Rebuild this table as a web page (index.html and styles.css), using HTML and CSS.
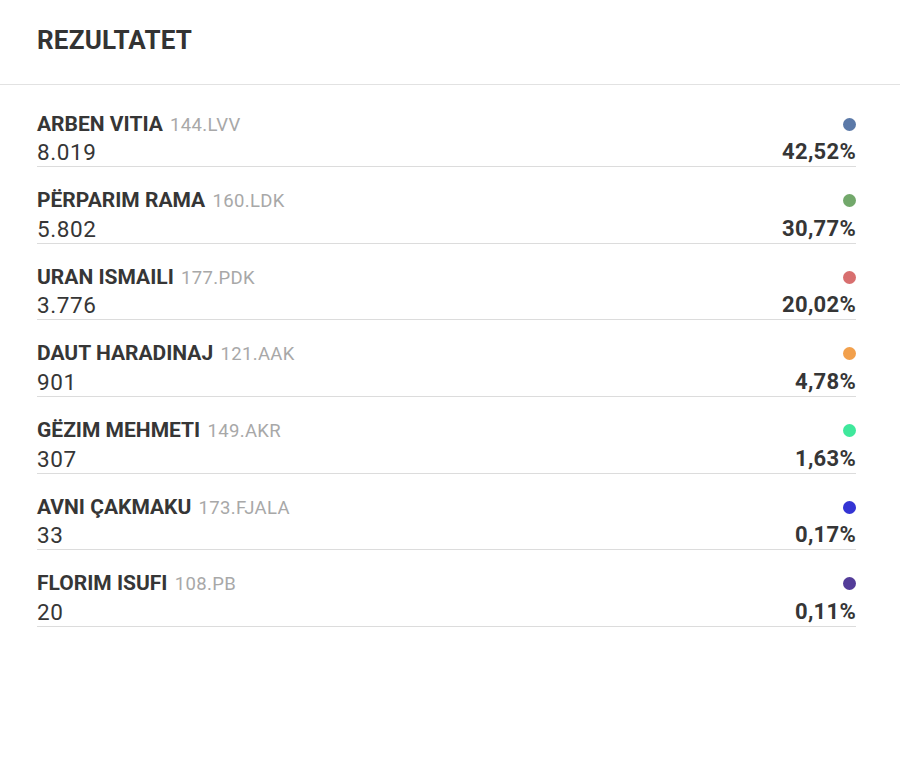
FILE: index.html
```html
<!DOCTYPE html>
<html lang="sq">
<head>
<meta charset="utf-8">
<title>Rezultatet</title>
<link rel="stylesheet" href="styles.css">
</head>
<body>
<div class="panel">
  <div class="panel-header"><h2 class="title">REZULTATET</h2></div>
  <ul class="results">
    <li class="row">
      <div class="line"><span class="name">ARBEN VITIA <span class="party">144.LVV</span></span><span class="dot c1"></span></div>
      <div class="line"><span class="votes">8.019</span><span class="pct">42,52%</span></div>
    </li>
    <li class="row">
      <div class="line"><span class="name">PËRPARIM RAMA <span class="party">160.LDK</span></span><span class="dot c2"></span></div>
      <div class="line"><span class="votes">5.802</span><span class="pct">30,77%</span></div>
    </li>
    <li class="row">
      <div class="line"><span class="name">URAN ISMAILI <span class="party">177.PDK</span></span><span class="dot c3"></span></div>
      <div class="line"><span class="votes">3.776</span><span class="pct">20,02%</span></div>
    </li>
    <li class="row">
      <div class="line"><span class="name">DAUT HARADINAJ <span class="party">121.AAK</span></span><span class="dot c4"></span></div>
      <div class="line"><span class="votes">901</span><span class="pct">4,78%</span></div>
    </li>
    <li class="row">
      <div class="line"><span class="name">GËZIM MEHMETI <span class="party">149.AKR</span></span><span class="dot c5"></span></div>
      <div class="line"><span class="votes">307</span><span class="pct">1,63%</span></div>
    </li>
    <li class="row">
      <div class="line"><span class="name">AVNI ÇAKMAKU <span class="party">173.FJALA</span></span><span class="dot c6"></span></div>
      <div class="line"><span class="votes">33</span><span class="pct">0,17%</span></div>
    </li>
    <li class="row">
      <div class="line"><span class="name">FLORIM ISUFI <span class="party">108.PB</span></span><span class="dot c7"></span></div>
      <div class="line"><span class="votes">20</span><span class="pct">0,11%</span></div>
    </li>
  </ul>
</div>
</body>
</html>
```
FILE: styles.css
```css
* { box-sizing: border-box; }
html, body { margin: 0; padding: 0; background: #fff; }
body { font-family: Roboto, "Liberation Sans", sans-serif; color: #333; }

.panel { width: 900px; }
.panel-header {
  height: 85px;
  padding: 25px 37px 0;
  border-bottom: 1px solid #e2e2e2;
}
.title {
  margin: 0;
  font-size: 26px;
  line-height: 30px;
  font-weight: 700;
  letter-spacing: 0.2px;
  color: #333;
}
.results {
  list-style: none;
  margin: 0;
  padding: 25px 44px 0 37px;
  display: flex;
  flex-direction: column;
  gap: 19.67px;
}
.row {
  display: flex;
  flex-direction: column;
  border-bottom: 1px solid #dcdcdc;
}
.line {
  display: flex;
  justify-content: space-between;
  align-items: center;
  height: 28px;
}
.name {
  font-size: 21px;
  line-height: 28px;
  font-weight: 700;
  color: #363636;
}
.party {
  margin-left: 2px;
  font-weight: 400;
  font-size: 18.5px;
  letter-spacing: 0.35px;
  color: #a8a8a8;
}
.votes {
  font-size: 22.5px;
  line-height: 28px;
  letter-spacing: 0.6px;
  color: #363636;
}
.pct {
  font-size: 22px;
  line-height: 28px;
  font-weight: 700;
  letter-spacing: 0.3px;
  color: #363636;
}
.dot {
  width: 13px;
  height: 13px;
  border-radius: 50%;
}
.c1 { background: #5b79a8; }
.c2 { background: #72a86b; }
.c3 { background: #d86f6f; }
.c4 { background: #f2a04c; }
.c5 { background: #3fe89c; }
.c6 { background: #3434d4; }
.c7 { background: #533c99; }
```
